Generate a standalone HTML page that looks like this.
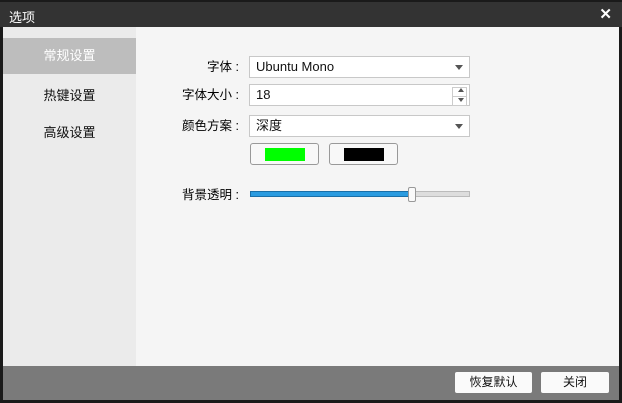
<html><head><style>
body{margin:0;width:622px;height:403px;background:#1a1a1a;position:relative;overflow:hidden;font-family:"Liberation Sans","Noto Sans CJK SC",sans-serif;font-size:13px;color:#111}
div{position:absolute;box-sizing:border-box}
.f{background:#fff;border:1px solid #c8c8c8;height:22px;left:249px;width:221px;padding:0 6px;line-height:20px;font-size:13px}
.ar{position:absolute;right:6px;top:8px;width:0;height:0;border-left:4px solid transparent;border-right:4px solid transparent;border-top:5px solid #555}
.l{right:383px;text-align:right;font-size:12.5px;line-height:14px;color:#000}
.b{background:#f8f8f8;border:1px solid #999;border-radius:3px}
.fb{background:#fafafa;border-radius:2px;height:21px;top:372px;text-align:center;font-size:12px;line-height:21px}
</style></head><body>
<div style="left:0;top:2px;width:622px;height:25px;background:#333;color:#fff;font-size:13px;padding:5px 9px">选项</div>
<div style="right:10px;top:5px;color:#fff;font-weight:bold;font-size:15px">✕</div>
<div style="left:3px;top:27px;width:616px;height:340px;background:#f5f5f5"></div>
<div style="left:3px;top:27px;width:133px;height:340px;background:#ebebeb"></div>
<div style="left:3px;top:38px;width:133px;height:36px;background:#bdbdbd;color:#fff;text-align:center;line-height:36px">常规设置</div>
<div style="left:3px;top:85px;width:133px;text-align:center;">热键设置</div>
<div style="left:3px;top:122px;width:133px;text-align:center;">高级设置</div>
<div class="l" style="top:60px">字体&nbsp;:</div>
<div class="l" style="top:88px">字体大小&nbsp;:</div>
<div class="l" style="top:119px">颜色方案&nbsp;:</div>
<div class="l" style="top:188px">背景透明&nbsp;:</div>
<div class="f" style="top:56px">Ubuntu Mono<span class="ar"></span></div>
<div class="f" style="top:84px">18
<span style="position:absolute;right:2px;top:2px;width:13px;height:8px;border:1px solid #ccc"></span>
<span style="position:absolute;right:2px;top:11px;width:13px;height:8px;border:1px solid #ccc"></span>
<span style="position:absolute;right:5px;top:3px;border-left:3px solid transparent;border-right:3px solid transparent;border-bottom:4px solid #555"></span>
<span style="position:absolute;right:5px;top:13px;border-left:3px solid transparent;border-right:3px solid transparent;border-top:4px solid #555"></span></div>
<div class="f" style="top:115px">深度<span class="ar"></span></div>
<div class="b" style="left:250px;top:143px;width:69px;height:22px"><div style="left:14px;top:4px;width:40px;height:13px;background:#0f0"></div></div>
<div class="b" style="left:329px;top:143px;width:69px;height:22px"><div style="left:14px;top:4px;width:40px;height:13px;background:#000"></div></div>
<div style="left:250px;top:191px;width:220px;height:6px;background:#ddd;border:1px solid #bbb"></div>
<div style="left:250px;top:191px;width:163px;height:6px;background:#2a9be0;border:1px solid #1a6fa8"></div>
<div style="left:408px;top:187px;width:8px;height:15px;background:#fafafa;border:1px solid #999;border-radius:2px"></div>
<div style="left:3px;top:366px;width:616px;height:34px;background:#7a7a7a"></div>
<div class="fb" style="left:455px;width:77px">恢复默认</div>
<div class="fb" style="left:541px;width:68px">关闭</div>
</body></html>
